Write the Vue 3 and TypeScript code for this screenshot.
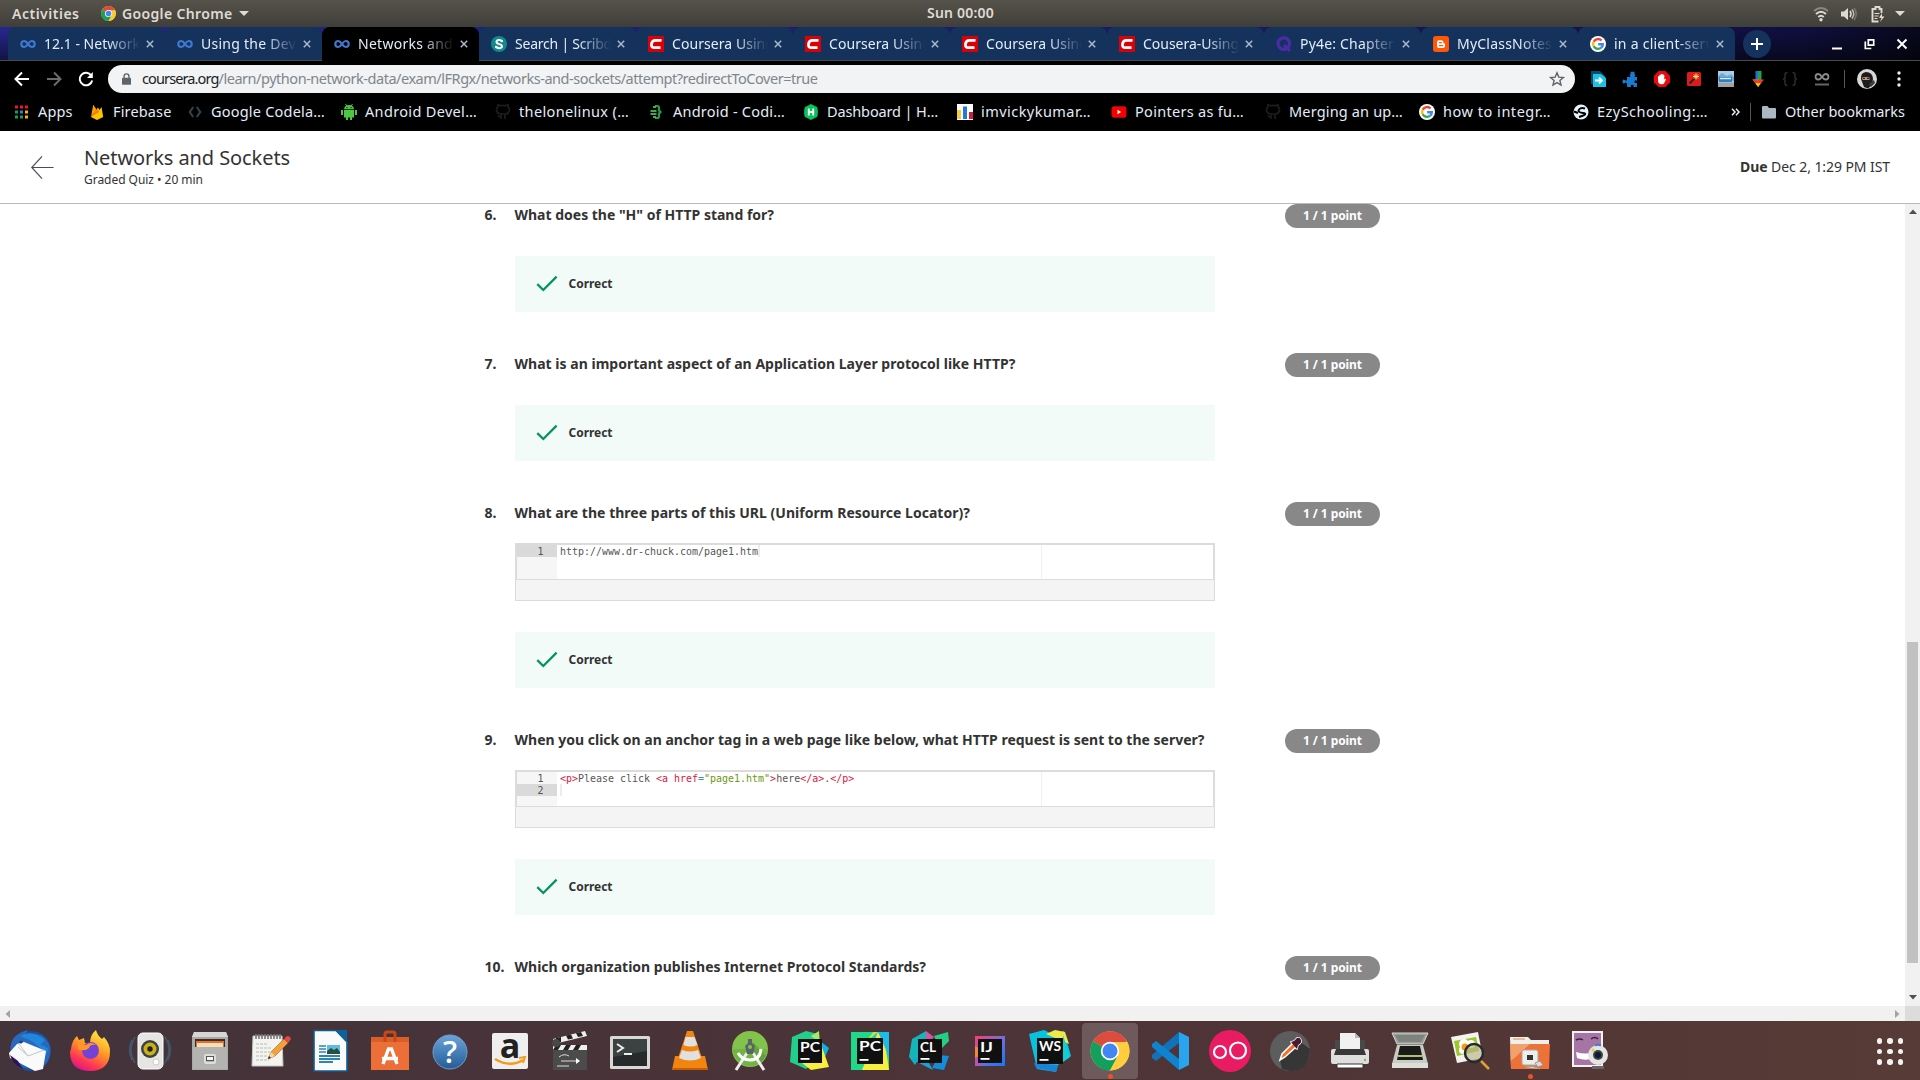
<script setup lang="ts">
import type { ObjectDirective } from 'vue'

interface Tab { icon: string; title: string; width: number; active?: boolean; plain?: boolean }
interface Bookmark { icon: string; label: string; slot: number; width: number }
interface Token { text: string; kind?: string }
interface Question { no: number; text: string; width: number; lines?: Token[][]; answered: boolean }

/* Spreads letters so a label takes up exactly the given number of pixels. */
const vFit: ObjectDirective<HTMLElement, number> = {
  mounted(el, { value }) {
    const count = (el.textContent ?? '').trim().length
    const range = document.createRange()
    range.selectNodeContents(el)
    const natural = range.getBoundingClientRect().width
    if (count > 0 && value) el.style.letterSpacing = `${((value - natural) / count).toFixed(3)}px`
  },
}

const googleG = '<circle cx="8" cy="8" r="8" fill="#fff"/><g fill="none" stroke-width="2.4"><path d="M11.5 4.500A4.900 4.900 0 0 0 3.700 5.700" stroke="#ea4335"/><path d="M3.700 5.700a4.900 4.900 0 0 0 0 4.600" stroke="#fbbc05"/><path d="M3.700 10.300a4.900 4.900 0 0 0 7.500 1.400" stroke="#34a853"/><path d="M11.200 11.700A4.700 4.700 0 0 0 12.800 8.200H8.200" stroke="#4285f4"/></g>'
const octocat = '<path d="M6 15v-2.200c-2 .4-2.600-.8-3-1.500M10 15v-3c0-1-.3-1.500-.7-1.800 2.900-.3 5.200-1.400 5.200-4.400 0-1.200-.6-2.200-1.300-2.900.1-.5.1-1.300-.2-2-.9 0-1.900.5-2.500.9a9 9 0 0 0-5 0C4.900 1.400 3.900.9 3 .9c-.3.700-.3 1.500-.2 2-.7.7-1.300 1.700-1.300 2.900 0 3 2.300 4.100 5.200 4.400-.4.300-.7.900-.7 1.500" fill="none" stroke="#1c1c1f" stroke-width="1.800"/>'
const infinity = '<path d="M8 8C6.600 6 5.700 5 4.300 5a3 3 0 0 0 0 6C6 11 7 9.600 8 8s2-3 3.700-3a3 3 0 0 1 0 6C10.300 11 9.400 10 8 8z" fill="none" stroke="#3f78cf" stroke-width="2.200"/>'
const redC = '<rect width="16" height="16" fill="#d90007"/><path d="M13.500 4.300H7.500Q4 4.300 3.500 8T6.500 11.700H12.500" fill="none" stroke="#fff" stroke-width="2.800"/>'

const glyphs: Record<string, string> = {
  infinity,
  redC,
  google: googleG,
  octocat,
  scribd: '<circle cx="8" cy="8" r="8" fill="#128a8c"/><path d="M11 5.200C9.500 3.300 5.500 3.500 5.500 6c0 2.600 5.500 1.600 5.500 4.300 0 2.300-4.300 2.600-6 .4" fill="none" stroke="#fff" stroke-width="2"/><circle cx="10.800" cy="5" r="1.300" fill="#fff"/><circle cx="5.200" cy="11" r="1.300" fill="#fff"/>',
  quiz: '<circle cx="7.800" cy="7.600" r="5.800" fill="none" stroke="#4b2ca8" stroke-width="3.200"/><path d="M8 9l6 6" stroke="#4b2ca8" stroke-width="3"/>',
  blogger: '<rect width="16" height="16" rx="3" fill="#ff5708"/><path d="M6 4.200h2.400a1.900 1.900 0 0 1 1.900 1.900c0 1 .3 1.200 1 1.200.5 0 .7.300.7.800V10a2 2 0 0 1-2 2H6a2 2 0 0 1-2-2V6.200a2 2 0 0 1 2-2z" fill="#fff"/><path d="M6.300 6.700h2M6.300 9.700h3.400" stroke="#ff5708" stroke-width="1.200" stroke-linecap="round"/>',
  chrome: '<circle cx="8" cy="8" r="8" fill="#fbc934"/><path d="M8 8L1.100 4A8 8 0 0 1 14.900 4z" fill="#dd4b3e"/><path d="M8 8L1.100 4A8 8 0 0 0 8 16l3.500-6z" fill="#1a9e58"/><path d="M8 4.500h7A8 8 0 0 1 8 16l3.300-6z" fill="#fbc934"/><circle cx="8" cy="8" r="3.800" fill="#fff"/><circle cx="8" cy="8" r="3" fill="#4285f4"/>',
  apps: '<g><path d="M1 1.500h3v3h-3zM6 1.500h3v3h-3zM11 1.500h3v3h-3z" fill="#f0142d"/><path d="M1 6.500h3v3h-3z" fill="#12a05c"/><path d="M6 6.500h3v3h-3z" fill="#2b7de9"/><path d="M11 6.500h3v3h-3z" fill="#ffb300"/><path d="M1 11.500h3v3h-3zM6 11.500h3v3h-3z" fill="#12a05c"/><path d="M11 11.500h3v3h-3z" fill="#ffb300"/></g>',
  firebase: '<path d="M2 13L4.200.8 7.500 5.500z" fill="#ffa000"/><path d="M2 13L9 3.500l1.500 2.500L12.500 3l1.700 10L8 16z" fill="#ffc400"/><path d="M2 13L8.700 5l1.500 3z" fill="#f57c00"/>',
  codelabs: '<path d="M6.200 3L2.800 8l3.400 5M9.800 3l3.400 5-3.400 5" fill="none" stroke="#30424d" stroke-width="2.200"/>',
  android: '<path d="M3 6h10v7.500H3zM0 6h2v5H0zM14 6h2v5h-2zM5 13h2v3H5zM9 13h2v3H9z" fill="#4fc644"/><path d="M3 5.300a5 4.300 0 0 1 10 0z" fill="#4fc644"/><path d="M4.500 0l1.400 2M11.500 0l-1.400 2" stroke="#4fc644"/><circle cx="6" cy="3.700" r=".6" fill="#000"/><circle cx="10" cy="3.700" r=".6" fill="#000"/>',
  codi: '<path d="M6 2h2.500q1.500 0 1.500 2v2.500L11.500 8 10 9.500V12q0 2-1.500 2H6" fill="none" stroke="#1e9e4f" stroke-width="2.200"/><path d="M4 3h3M1.500 7h6M1.500 10h6M4 13h3" stroke="#55dd72" stroke-width="1.400"/>',
  hacker: '<path d="M8 0l6 3c1 .5 1.300 9 0 10L8 16 2 13C.7 12 1 3.500 2 3z" fill="#07c15c"/><path d="M5.800 4.500v7M10.200 4.500v7M5.800 8h4.400" stroke="#fff" stroke-width="1.900"/>',
  chart: '<rect width="16" height="16" fill="#fff"/><path d="M0 6h4v9H0z" fill="#f7cd35"/><path d="M6 2.500h4V15H6z" fill="#207cd4"/><path d="M12 8h4v7h-4z" fill="#d01f38"/>',
  youtube: '<rect x=".5" y="2.300" width="15" height="11.400" rx="3" fill="#f60000"/><path d="M6.500 5.800v4.400L10.200 8z" fill="#fff"/>',
  globe: '<circle cx="8" cy="8" r="7.500" fill="#e8f4fb"/><path d="M12 4.500Q8 3 6 5.500T10 9t-4 4M1 7.500l4 1.500" fill="none" stroke="#000" stroke-width="1.900"/>',
  folder: '<path d="M1 3q0-1 1-1h4.500l1.500 2H14q1 0 1 1v8.500q0 1-1 1H2q-1 0-1-1z" fill="#a9b8c2"/>',
}

const tabs: Tab[] = [
  { icon: 'infinity', title: '12.1 - Network', width: 96 },
  { icon: 'infinity', title: 'Using the Dev', width: 95, plain: true },
  { icon: 'infinity', title: 'Networks and', width: 95, active: true },
  { icon: 'scribd', title: 'Search | Scribd', width: 97 },
  { icon: 'redC', title: 'Coursera Using', width: 102 },
  { icon: 'redC', title: 'Coursera Using', width: 102 },
  { icon: 'redC', title: 'Coursera Using', width: 102 },
  { icon: 'redC', title: 'Cousera-Using', width: 96 },
  { icon: 'quiz', title: 'Py4e: Chapter', width: 94 },
  { icon: 'blogger', title: 'MyClassNotes', width: 95 },
  { icon: 'google', title: 'in a client-serv', width: 99, plain: true },
]

const bookmarks: Bookmark[] = [
  { icon: 'apps', label: 'Apps', slot: 75, width: 34.5 },
  { icon: 'firebase', label: 'Firebase', slot: 98, width: 58.5 },
  { icon: 'codelabs', label: 'Google Codela…', slot: 154, width: 114 },
  { icon: 'android', label: 'Android Devel…', slot: 154, width: 112 },
  { icon: 'octocat', label: 'thelonelinux (…', slot: 154, width: 110 },
  { icon: 'codi', label: 'Android - Codi…', slot: 154, width: 112 },
  { icon: 'hacker', label: 'Dashboard | H…', slot: 154, width: 111 },
  { icon: 'chart', label: 'imvickykumar…', slot: 154, width: 110 },
  { icon: 'youtube', label: 'Pointers as fu…', slot: 154, width: 109 },
  { icon: 'octocat', label: 'Merging an up…', slot: 154, width: 114 },
  { icon: 'google', label: 'how to integr…', slot: 154, width: 108 },
  { icon: 'globe', label: 'EzySchooling:…', slot: 154, width: 111 },
]

const extensions: string[] = [
  '<path d="M1 0h9l5 5v8H1z" fill="#0b4a70"/><path d="M3 3h8l5 4v9H3z" fill="#19c3e6"/><path d="M5 9.500h6M9 6.500l3 3-3 3" fill="none" stroke="#fff" stroke-width="1.800"/>',
  '<path d="M5 6h3.500q-1.500-2.200 0-3V.8h4V3q1.500.8 0 3H15v4q-2-1.500-2.500.5T15 12v4h-3.500q.6-2.300-1.300-2.300T9 16H5v-3.500Q4 11 2.800 12 .5 13.500.5 10.500T2.800 9Q4 10 5 9z" fill="#1a7bce"/>',
  '<path d="M4.700 0h6.600L16 4.700v6.600L11.300 16H4.700L0 11.300V4.700z" fill="#ea0a0a"/><path d="M4 9V5.500q.8-1 1.500 0V4q.8-1 1.600 0v-.7q.8-.9 1.600 0V4q.8-.8 1.600 0v4.500q1.700-1.200 1.800-.2l-2 4Q9.300 13.500 7.800 13.300 4 13.500 4 9z" fill="#fff"/>',
  '<rect x="1" y="1" width="14" height="14" rx="1.500" fill="#dd1b1b"/><path d="M3.500 12.500l5-5" stroke="#222" stroke-width="1.800"/><path d="M10 2.500v6M7 5.500h6M8 3.500l4 4M12 3.500l-4 4" stroke="#ffe26a"/>',
  '<rect width="16" height="16" fill="#abcde8"/><path d="M0 5l4-3 5 3 4-2 3 3v4H0z" fill="#6fa9d4"/><rect x="1" y="6" width="13" height="5" fill="#2f80bf"/><path d="M2 7.500h11" stroke="#d7ecfa" stroke-width="1.500"/><rect y="11.500" width="16" height="4.500" fill="#a3a3a3"/>',
  '<path d="M5.500 0h3v9h-3z" fill="#1e71d8"/><path d="M8 0h3.500v9H8z" fill="#1fa548"/><path d="M2.500 8.500h6V16z" fill="#f5c400"/><path d="M8 8.500h6L8 16z" fill="#ee3a2e"/><path d="M2.500 8.500h5l1 3-3 1z" fill="#ee3a2e"/><path d="M8 12l3 .300L8 16l-2.500-3.500z" fill="#f5c400"/>',
  '<path d="M5.500 1.500Q3 1.500 3 4v2q0 2-2 2 2 0 2 2v2q0 2.500 2.500 2.500M10.500 1.500Q13 1.500 13 4v2q0 2 2 2-2 0-2 2v2q0 2.500-2.500 2.500" fill="none" stroke="#2b2b2b" stroke-width="1.600"/>',
  '<path d="M8 6C6.600 4 5.700 3 4.300 3a2.700 2.700 0 0 0 0 5.500C6 8.500 7 7.500 8 6s2-3 3.700-3a2.700 2.700 0 0 1 0 5.500C10.300 8.500 9.400 8 8 6z" fill="none" stroke="#8a8a8a" stroke-width="1.800"/><path d="M1 13.500h14" stroke="#666" stroke-width="2"/>',
]

const chromeBig = '<circle cx="24" cy="24" r="19.500" fill="#ffcd40"/><path d="M24 24L7.100 14.300A19.500 19.500 0 0 1 40.900 14.300z" fill="#dd4b3e"/><path d="M24 24L7.100 14.300A19.500 19.500 0 0 0 24 43.500l8-14z" fill="#12a05c"/><path d="M24 15h17.300A19.500 19.500 0 0 1 24 43.500l7.900-15z" fill="#ffcd40"/><circle cx="24" cy="24" r="9.200" fill="#fff"/><circle cx="24" cy="24" r="7.500" fill="#4285f4"/>'

function badge(label: string, x: number, y: number, s: number): string {
  return `<rect x="${x}" y="${y}" width="${s}" height="${s}" fill="#101010"/><text x="${x + 2}" y="${y + 12.5}" font-family="Lato, sans-serif" font-weight="700" font-size="14" textLength="${label === 'IJ' ? 13 : label === 'CL' ? 16 : s - 4}" lengthAdjust="spacingAndGlyphs" fill="#fff">${label}</text><rect x="${x + 2.5}" y="${y + s - 5}" width="9" height="1.800" fill="#fff"/>`
}

const dock: { art: string; active?: boolean; running?: boolean }[] = [
  { art: '<circle cx="25" cy="24" r="20" fill="#1d4f9c"/><path d="M5 28Q1 8 22 3l-3 5Q38 3 44 20q2 17-14 24l3-5-9 3q-14-2-19-14z" fill="#2868bd"/><path d="M14 9q12-7 25 4l-5 5q4 0 8 4-5 18-17 20L40 26 26 14z" fill="#2187dd"/><path d="M3 26l8-9 7-2 22 9-3 18-8 2L4 31z" fill="#fafafa"/><path d="M12 20l10 9 16-6M13 17l9 12" stroke="#c2c4c8" fill="none"/><path d="M4 28q2 9 13 14l-5-8z" fill="#2b145c"/><circle cx="15" cy="15" r="1.500" fill="#143e74"/>' },
  { art: '<defs><linearGradient id="fx" x1=".8" y1="0" x2=".3" y2="1"><stop stop-color="#fff14a"/><stop offset=".45" stop-color="#ff9a24"/><stop offset=".8" stop-color="#ff3455"/><stop offset="1" stop-color="#d8178a"/></linearGradient></defs><path d="M5 22Q6 13 11 9l2 4 5-2 1 5h5q0-8 6-13 1 5 6 9l2-2q6 7 6 14 0 20-20 20T4 25z" fill="url(#fx)"/><circle cx="24.500" cy="23.500" r="8.500" fill="#7442d8"/><path d="M12 17l8 1q5-4 10 0-6-1-7 3-4 4-11 1z" fill="#ff9822"/>' },
  { art: '<g fill="none" stroke="#43647e" stroke-width="1.500" opacity=".7"><path d="M9 10q-8 13 0 26M6 13q-5 10 0 20M39 10q8 13 0 26M42 13q5 10 0 20"/></g><rect x="12" y="6" width="25" height="36" rx="5" fill="#e5e5e3" stroke="#fff"/><circle cx="24" cy="22" r="9" fill="#40413e"/><circle cx="24" cy="22" r="6.500" fill="#c9b01c"/><circle cx="24" cy="22" r="2.700" fill="#222"/><circle cx="30" cy="35" r="3" fill="#fff" stroke="#ccc"/>' },
  { art: '<path d="M8 5h32l2 5v33H6V10z" fill="#a9a9a7"/><path d="M8 5h32l2 5H6z" fill="#d6d6d4"/><rect x="9" y="12" width="30" height="9" fill="#3b3028"/><path d="M10 14h28v6H10z" fill="#e2702c"/><path d="M11 16h26v5H11z" fill="#f6dfb8"/><path d="M7 20h34v22H7z" fill="#b3b3b1"/><rect x="19" y="28" width="10" height="8" rx="1" fill="none" stroke="#ddd" stroke-width="2"/><rect x="20.500" y="29.500" width="7" height="4" fill="#f8f8f8" stroke="#555"/>' },
  { art: '<path d="M7 9h29l1 30H6z" fill="#f3f3ef" stroke="#c7c7c1"/><path d="M10 7v5M13 7v5M16 7v5M19 7v5M22 7v5M25 7v5M28 7v5M31 7v5M34 7v5" stroke="#777" stroke-width="1.600"/><path d="M10 17h12M10 21h16M10 25h14M10 29h11M10 33h13" stroke="#bbb" stroke-dasharray="3 1"/><path d="M22 32l3-7L38 12l4 4-13 13z" fill="#f3a13a" stroke="#a85b15" stroke-width=".6"/><path d="M38 12l3-3q3 0 4 3l-3 4z" fill="#e04a4a"/><path d="M22 32l3-7 4 4z" fill="#f1d6aa"/><path d="M22 32l1-3 2 2z" fill="#222"/>' },
  { art: '<path d="M8 3.500h22L41 15v29H8z" fill="#fafafa" stroke="#0d5d92" stroke-width="1.600"/><path d="M29 3h12v12z" fill="#0a639c"/><path d="M13 19h7M13 22h7M13 25h7" stroke="#2f84b5" stroke-width="1.500"/><rect x="21" y="18" width="13" height="9" fill="#5cbbe7"/><path d="M21 27v-3l4-3 3 2 3-2 3 4v2z" fill="#29503b"/><path d="M13 29h21M13 32h21M13 35h14" stroke="#2f84b5" stroke-width="1.800"/>' },
  { art: '<path d="M5 10h38v33H5z" fill="#ec6f38"/><path d="M5 10h38v5H5z" fill="#db5e29"/><path d="M19 15V7q0-2 2-2h6q2 0 2 2v8" fill="none" stroke="#c94813" stroke-width="3"/><path d="M17 37l5.500-15h3L31 37M16 31.500h16" fill="none" stroke="#fff" stroke-width="3.400"/>' },
  { art: '<defs><linearGradient id="hp" x2="0" y2="1"><stop stop-color="#6ba4d9"/><stop offset="1" stop-color="#245b98"/></linearGradient></defs><circle cx="24" cy="25" r="17" fill="url(#hp)" stroke="#6c9fc9" stroke-width="1"/><text x="24" y="36" text-anchor="middle" font-family="Open Sans, sans-serif" font-weight="600" font-size="31" fill="#fff">?</text>' },
  { art: '<rect x="6" y="6" width="36" height="36" rx="2" fill="#efefef"/><text x="24" y="31" text-anchor="middle" font-family="Open Sans, sans-serif" font-weight="700" font-size="34" fill="#222">a</text><path d="M9 32q15 9 28 1" fill="none" stroke="#f79a1c" stroke-width="2.500"/><path d="M33 31l6-1-2 6" fill="none" stroke="#f79a1c" stroke-width="2"/>' },
  { art: '<rect x="7" y="18" width="34" height="25" fill="#4b4b4b"/><rect x="7" y="18" width="34" height="5" fill="#eee"/><path d="M10 18h5l-3 5H7zM20 18h5l-3 5h-5zM30 18h5l-3 5h-5z" fill="#222"/><path d="M7 12L39 4l2 5L8 17z" fill="#eee"/><path d="M10 11l5-1 0 5-5 1zM20 8.500l5-1 2 4-5 1zM30 6l5-1 2 4-5 1z" fill="#222"/><circle cx="10" cy="16" r="4" fill="#484848"/><path d="M13 30q5-4 10-1M15 34h18M11 39h12" stroke="#ddd" fill="none"/><path d="M30 31l4 3-4 3z" fill="#fff"/>' },
  { art: '<rect x="4" y="9" width="40" height="33" rx="1.500" fill="#d8d8d6"/><rect x="7" y="12" width="34" height="27" fill="#262a2b"/><path d="M7 12h34v12L7 30z" fill="#3c4142"/><path d="M11 17l6 4-6 4M18 27h8" fill="none" stroke="#eee" stroke-width="2"/>' },
  { art: '<path d="M9 29h30l3 14H6z" fill="#f28410"/><path d="M21 4h6l10 30q-13 7-26 0z" fill="#f28410"/><path d="M19.500 10h9l3 8q-7 3-14 0z" fill="#e0e0e0"/><path d="M16 23q8 3 16 0l3 8q-11 5-22 0z" fill="#e0e0e0"/><path d="M6 42h36" stroke="#c65c05" stroke-width="2"/>' },
  { art: '<circle cx="24" cy="22" r="18" fill="#82c34c"/><path d="M7 22h34a17 17 0 0 1-34 0z" fill="#72b442"/><path d="M27 15l13 14-7 9-9-13z" fill="#4c8e3a" opacity=".5"/><path d="M21 26L10 43M27 26l11 17" stroke="#eee" stroke-width="3"/><path d="M12 26q4 7 12 7 10 0 11-11" fill="none" stroke="#fff" stroke-width="3"/><path d="M22 12h4v4l3 3-2 8h-6l-2-8 3-3z" fill="#5c6368"/><circle cx="24" cy="20" r="2" fill="#82c34c"/>' },
  { art: '<path d="M6 10L20 4l12 3 5 22-17 13L4 35z" fill="#23ce8d"/><path d="M25 9l8-5 1 13z" fill="#a3e96b"/><path d="M34 14l9 7-4 9-6-2z" fill="#0db1e4"/><path d="M36 20l7 20-18 3-9-7z" fill="#f8ef3f"/>' + badge('PC', 12, 12, 24) },
  { art: '<path d="M5 5h38v38H5z" fill="#21d789"/><path d="M26 5h17v25L30 12z" fill="#1dbbe8"/><path d="M16 43L32 5l8 18 3 20z" fill="#f7ee3b"/><path d="M20 15L27 5h5z" fill="#b2e84b"/>' + badge('PC', 11, 11, 26) },
  { art: '<path d="M6 12L20 4v14L9 38l-6-8z" fill="#13b5b8"/><path d="M20 4l8 6-8 8z" fill="#d554a8"/><path d="M28 9l14-4 1 9-9 9z" fill="#23cf87"/><path d="M33 28l10 1-5 14-12-2z" fill="#118dd9"/><path d="M5 32l22 11-7-12z" fill="#12a5db"/>' + badge('CL', 12, 12, 24) },
  { art: '<defs><linearGradient id="ij" x2="1" y2="1"><stop stop-color="#fd3b72"/><stop offset=".5" stop-color="#7a6bd8"/><stop offset="1" stop-color="#087cfa"/></linearGradient></defs><rect x="9" y="9" width="30" height="30" fill="url(#ij)"/><path d="M9 20l5 5v14H9z" fill="#b653b7"/><path d="M9 19l4 2v8l-4 2z" fill="#f0873c"/>' + badge('IJ', 12, 12, 24) },
  { art: '<path d="M3 7l15-4 8 4 12-3 7 25-13 9-2 7-19-3z" fill="#07c3dd"/><path d="M20 7l9-4 10 2 4 12z" fill="#eee94b"/><path d="M8 36l24 2-2 7-20-4z" fill="#1b83d5"/><path d="M37 8l7 22-7 5z" fill="#10ced5"/>' + badge('WS', 11, 11, 26) },
  { art: chromeBig, active: true, running: true },
  { art: '<path d="M33 5l10 5v28l-10 5z" fill="#2ba4ee"/><path d="M33 5v11L10 34l-4-3v-3z" fill="#1272b8"/><path d="M33 43V32L10 14l-4 3v3z" fill="#0f83cd"/>' },
  { art: '<circle cx="24" cy="24" r="21" fill="#e91c63"/><circle cx="14" cy="25" r="6" fill="none" stroke="#fff" stroke-width="2.200"/><circle cx="32" cy="23.500" r="8" fill="none" stroke="#fff" stroke-width="2.200"/>' },
  { art: '<circle cx="24" cy="24" r="20" fill="#5d5d5d"/><path d="M33 14l11 8q-1 22-20 22l-8-2-2-9z" fill="#363636"/><path d="M14 33l2-6 10-10-1-2 3-1 3-3q3-1 4 2t-3 5l-1 4-2-1-10 9z" fill="#ef702d" stroke="#fff" stroke-width="1.500"/><path d="M25 15l3-1 3-3q3-1 4 2t-3 5l-1 4z" fill="#4b1731"/>' },
  { art: '<path d="M9 13h30v14H9z" fill="#494949"/><path d="M14 6h15l5 5v13H14z" fill="#f1f1f1"/><path d="M29 6v5h5z" fill="#bbb"/><rect x="5" y="22" width="38" height="15" rx="2" fill="#dedede"/><path d="M10 22h28l2 6H8z" fill="#383838"/><path d="M11 37h26v4H11z" fill="#fff" stroke="#333"/><circle cx="39" cy="33" r="1.200" fill="#72c742"/>' },
  { art: '<path d="M6 6h36l-5 11H11z" fill="#9ba09b" stroke="#d4d6d2"/><path d="M9 8h30l-4 7H13z" fill="#7d837f"/><path d="M11 18h26l5 19H6z" fill="#c9cbc7"/><path d="M14 19h20l3 14H11z" fill="#191b19"/><path d="M12 29h24" stroke="#e4f295" stroke-width="1.500"/><path d="M6 36h36v5H6z" fill="#deded9"/>' },
  { art: '<path d="M5 10l27-5 5 26-26 5z" fill="#f3f3f0"/><path d="M8 14l22-4 3 14-22 5z" fill="#9fc52d"/><g fill="#fff"><circle cx="18" cy="17" r="5"/><circle cx="25" cy="17" r="4"/><circle cx="17" cy="23" r="4"/></g><circle cx="19" cy="20" r="3.500" fill="#f29b1a"/><circle cx="28" cy="26" r="9" fill="#bbb48a" fill-opacity=".65" stroke="#252b2d" stroke-width="2.500"/><path d="M35 34l8 8" stroke="#df9f3a" stroke-width="2.500"/>' },
  { art: '<path d="M4 10h18l3 3h18v28H5z" fill="#efefeb"/><path d="M7 12h12" stroke="#ef8247"/><path d="M4 17h40l-1 25H5z" fill="#ee7138"/><path d="M4 17h20L5 34z" fill="#f3bc8c" opacity=".65"/><rect x="16" y="23" width="16" height="15" rx="2" fill="#eceeea" stroke="#aaa"/><path d="M21 28h6v5h-6z" fill="#333"/><path d="M19 40q8-2 15 2M29 36l5-2 3 4-5 2z" fill="#ddd" stroke="#999"/>', running: true },
  { art: '<rect x="7" y="5" width="29" height="34" fill="#a775a5" stroke="#f2f2f2" stroke-width="2"/><path d="M10 13q4-2 7 0M25 12q4-3 7 0" stroke="#342638" stroke-width="1.500" fill="none"/><path d="M10 25q9 3 20 0v5q-9 5-19 1z" fill="#fff"/><path d="M26 39h12v3H26z" fill="#666"/><circle cx="32" cy="28" r="10" fill="#e5e5e5"/><circle cx="32" cy="28" r="5" fill="#3c4345"/><circle cx="32" cy="28" r="3" fill="#101a2e"/><circle cx="27" cy="23" r="1.600" fill="#d8d831"/><path d="M29 18.500q3-1.500 6 0" stroke="#4a7fc0" stroke-width="2" fill="none"/>' },
]

const questions: Question[] = [
  { no: 6, text: 'What does the "H" of HTTP stand for?', width: 259.5, answered: true },
  { no: 7, text: 'What is an important aspect of an Application Layer protocol like HTTP?', width: 501, answered: true },
  {
    no: 8, text: 'What are the three parts of this URL (Uniform Resource Locator)?', width: 455.5, answered: true,
    lines: [[{ text: 'http://www.dr-chuck.com/page1.htm' }]],
  },
  {
    no: 9, text: 'When you click on an anchor tag in a web page like below, what HTTP request is sent to the server?', width: 690, answered: true,
    lines: [
      [
        { text: '<p>', kind: 'tag' }, { text: 'Please click ' }, { text: '<a href', kind: 'tag' }, { text: '=', kind: 'op' },
        { text: '"page1.htm"', kind: 'str' }, { text: '>', kind: 'tag' }, { text: 'here' }, { text: '</a>', kind: 'tag' },
        { text: '.' }, { text: '</p>', kind: 'tag' },
      ],
      [],
    ],
  },
  { no: 10, text: 'Which organization publishes Internet Protocol Standards?', width: 411.5, answered: false },
]
</script>

<template>
  <div class="desktop">
    <div class="panel">
      <span class="activities" v-fit="67.5">Activities</span>
      <svg class="panel-app" viewBox="0 0 16 16" v-html="glyphs.chrome"></svg>
      <span class="panel-name" v-fit="110.5">Google Chrome</span>
      <i class="caret"></i>
      <span class="clock"><span v-fit="67">Sun 00:00</span></span>
      <div class="status">
        <svg width="16" height="16" viewBox="0 0 16 16" fill="none" stroke-width="1.900">
          <path d="M1 5q7-6 14 0" stroke="#8a8881" />
          <path d="M3 8q5-4.500 10 0M5.200 11q2.800-2.500 5.600 0" stroke="#dfdbd2" />
          <circle cx="8" cy="13.800" r="1.700" fill="#dfdbd2" />
        </svg>
        <svg width="16" height="16" viewBox="0 0 16 16" fill="none" stroke-width="1.500">
          <path d="M0 5.500h3L7 2v12L3 10.500H0z" fill="#dfdbd2" />
          <path d="M9 5q2 3 0 6" stroke="#dfdbd2" /><path d="M11 3.500q3.500 4.500 0 9" stroke="#c0bdb5" /><path d="M13 2q4.500 6 0 12" stroke="#77756e" />
        </svg>
        <svg width="16" height="18" viewBox="0 0 16 18" fill="none">
          <path d="M12.500 8V4h-2V2h-4v2h-3v12.500h6" stroke="#dfdbd2" stroke-width="1.900" />
          <path d="M5.500 8.500h5M5.500 11h4M5.500 13.500h3" stroke="#dfdbd2" stroke-width="1.200" />
          <path d="M13 8l-3 5h2.500L11 17l4.500-5.500H13z" fill="#dfdbd2" />
        </svg>
        <i class="caret"></i>
      </div>
    </div>

    <div class="tabstrip">
      <div v-for="(tab, i) in tabs" :key="i" class="tab" :class="{ active: tab.active, plain: tab.plain }">
        <svg class="glyph" viewBox="0 0 16 16" v-html="glyphs[tab.icon]"></svg>
        <span class="tab-title"><span v-fit="tab.width">{{ tab.title }}</span></span>
        <svg class="tab-close" viewBox="0 0 8 8"><path d="M.8.8l6.400 6.400M7.200.8L.8 7.200" /></svg>
      </div>
      <div class="newtab"><svg viewBox="0 0 12 12"><path d="M6 0v12M0 6h12" stroke="#fff" stroke-width="2" /></svg></div>
      <div class="wm">
        <svg width="12" height="12" viewBox="0 0 12 12"><path d="M1 10.500h10" stroke="#fff" stroke-width="2" /></svg>
        <svg width="12" height="12" viewBox="0 0 12 12" fill="none" stroke="#fff" stroke-width="1.700"><path d="M4.300 1.800h5.400v5.400H4.300z" /><path d="M1.300 3.500v7h6" /></svg>
        <svg width="12" height="12" viewBox="0 0 12 12"><path d="M1.500 1.500l9 9M10.500 1.500l-9 9" stroke="#fff" stroke-width="2" /></svg>
      </div>
    </div>

    <div class="toolbar">
      <svg class="nav" viewBox="0 0 16 16"><path d="M15 8H2M8 1.500L1.500 8 8 14.500" /></svg>
      <svg class="nav dim" viewBox="0 0 16 16"><path d="M1 8h13M8 1.500L14.500 8 8 14.500" /></svg>
      <svg class="nav" viewBox="0 0 16 16"><path d="M13.300 4.500A6.300 6.300 0 1 0 14.200 9.500" /><path d="M14.800 1v6H9z" class="solid" /></svg>
      <div class="omnibox">
        <svg class="lock" viewBox="0 0 10 13"><rect y="5" width="10" height="8" rx="1" fill="#5f6368" /><path d="M2.300 5.500V3.500a2.700 2.700 0 0 1 5.400 0v2" fill="none" stroke="#5f6368" stroke-width="1.500" /></svg>
        <span class="url"><b v-fit="76.500">coursera.org</b><span v-fit="599">/learn/python-network-data/exam/lFRgx/networks-and-sockets/attempt?redirectToCover=true</span></span>
        <svg class="star" viewBox="0 0 16 16"><path d="M8 1.800l1.800 4.300 4.600.4-3.500 3 1.100 4.500L8 11.600 4 14l1.100-4.500-3.500-3 4.600-.4z" fill="none" stroke="#5f6368" stroke-width="1.400" /></svg>
      </div>
      <div class="extensions">
        <svg v-for="(art, i) in extensions" :key="i" class="glyph" viewBox="0 0 16 16" v-html="art"></svg>
      </div>
      <i class="rule"></i>
      <svg class="avatar" viewBox="0 0 20 20"><circle cx="10" cy="10" r="10" fill="#d9d7d5" /><path d="M4 10Q3.500 3.500 9 3q6.500 0 7 7l-1 6-4 3.500-4-1.500z" fill="#1c1c1e" /><path d="M5 8.500q4-1 7.500 0V11H5.500z" fill="#be9a78" /><path d="M6 9.500h2M10 9.500h2" stroke="#222" /><path d="M12 15l5-4 1 3-4 4z" fill="#3c3c40" /></svg>
      <svg class="dots" viewBox="0 0 4 16"><circle cx="2" cy="2" r="1.700" /><circle cx="2" cy="8" r="1.700" /><circle cx="2" cy="14" r="1.700" /></svg>
    </div>

    <div class="bookmarks">
      <div v-for="mark in bookmarks" :key="mark.label" class="bookmark" :style="{ width: mark.slot + 'px' }">
        <svg class="glyph" viewBox="0 0 16 16" v-html="glyphs[mark.icon]"></svg>
        <span v-fit="mark.width">{{ mark.label }}</span>
      </div>
      <svg class="more" viewBox="0 0 9 8"><path d="M1 .8L4 4 1 7.200M5 .8L8 4 5 7.200" /></svg>
      <i class="rule"></i>
      <div class="bookmark">
        <svg class="glyph" viewBox="0 0 16 16" v-html="glyphs.folder"></svg>
        <span v-fit="120">Other bookmarks</span>
      </div>
    </div>

    <header class="quiz-head">
      <svg class="back" viewBox="0 0 24 24"><path d="M23.500 12H1M11.500.5L.8 12l10.700 11.500" /></svg>
      <div class="quiz-name">
        <h1><span v-fit="206">Networks and Sockets</span></h1>
        <p><span v-fit="119">Graded Quiz • 20 min</span></p>
      </div>
      <div class="due"><span v-fit="150"><b>Due</b> Dec 2, 1:29 PM IST</span></div>
    </header>

    <div class="viewport">
      <main class="questions">
        <section v-for="q in questions" :key="q.no" class="question">
          <div class="number">{{ q.no }}.</div>
          <div class="body">
            <h2><span v-fit="q.width">{{ q.text }}</span></h2>
            <div v-if="q.lines" class="editor">
              <div class="pane">
                <div class="gutter">
                  <div v-for="(line, i) in q.lines" :key="i" class="lineno" :class="{ current: i === q.lines.length - 1 }">{{ i + 1 }}</div>
                </div>
                <div class="code">
                  <div v-for="(line, i) in q.lines" :key="i" class="codeline"><span v-for="(t, k) in line" :key="k" :class="t.kind">{{ t.text }}</span><i v-if="i === q.lines.length - 1" class="cursor"></i></div>
                </div>
                <div class="beyond"></div>
              </div>
              <div class="console"></div>
            </div>
            <div v-if="q.answered" class="verdict">
              <svg viewBox="0 0 22 17"><path d="M1.300 9.200l6 5.800L20.600 1.600" /></svg>
              <span v-fit="44">Correct</span>
            </div>
          </div>
          <div class="points"><span v-fit="59">1 / 1 point</span></div>
        </section>
      </main>
      <div class="vbar">
        <svg viewBox="0 0 8 5"><path d="M0 5l4-4.500L8 5z" fill="#505050" /></svg>
        <div class="thumb"></div>
        <svg viewBox="0 0 8 5"><path d="M0 0l4 4.500L8 0z" fill="#505050" /></svg>
      </div>
    </div>
    <div class="hbar">
      <svg viewBox="0 0 5 8"><path d="M5 0L.5 4 5 8z" fill="#a3a3a3" /></svg>
      <svg viewBox="0 0 5 8"><path d="M0 0l4.500 4L0 8z" fill="#a3a3a3" /></svg>
      <div class="corner"></div>
    </div>

    <div class="dock">
      <div v-for="(app, i) in dock" :key="i" class="app" :class="{ active: app.active }">
        <svg viewBox="0 0 48 48" v-html="app.art"></svg>
        <i v-if="app.running" class="running"></i>
      </div>
      <div class="grid"><i v-for="n in 9" :key="n"></i></div>
    </div>
  </div>
</template>

<style>
html, body { margin: 0; overflow: hidden; background: #fff; }
</style>

<style scoped>
* { box-sizing: border-box; }
.desktop { width: 1920px; height: 1080px; display: flex; flex-direction: column; overflow: hidden; font-family: "Noto Sans", "Open Sans", sans-serif; color: #333; }
.desktop span { white-space: nowrap; }
svg { display: block; flex: none; overflow: visible; }
.glyph { width: 16px; height: 16px; }

.panel { position: relative; height: 27px; flex: none; display: flex; align-items: center; padding: 0 15px 0 12px; background: linear-gradient(#56534b, #403e39); color: #dfdbd2; font: 600 14px/26px "Noto Sans", sans-serif; }
.activities { width: 89px; }
.panel-app { width: 15px; height: 15px; margin-right: 6px; }
.panel-name { width: 117px; }
.caret { width: 0; height: 0; border: 5px solid transparent; border-top-color: #dfdbd2; border-bottom: 0; }
.clock { position: absolute; left: 927px; top: 0; }
.status { margin-left: auto; display: flex; align-items: center; gap: 12px; }
.status .caret { margin-left: -2px; }

.tabstrip { height: 34px; flex: none; display: flex; padding-left: 8px; border-bottom: 1px solid #4a4a4a; background: linear-gradient(transparent 10%, rgba(0, 0, 0, .5)), linear-gradient(90deg, #26268a, #1a1a66 60%, #0f0f3e 94%, #08081c); color: #e3edf7; font: 14px/32px "Noto Sans", sans-serif; }
.tab { position: relative; width: 157px; height: 33px; flex: none; display: flex; align-items: center; padding: 0 11px 0 12px; background: #14325b; border-radius: 8px 8px 0 0; }
.tab::after { content: ""; position: absolute; right: -1px; top: 7px; width: 1px; height: 20px; background: #5c7594; }
.tab.plain::after, .tab.active::after { display: none; }
.tab.active { background: #000; height: 34px; padding-bottom: 1px; }
.tab-title { width: 97px; margin-left: 8px; overflow: hidden; mask-image: linear-gradient(90deg, #000 65%, transparent 99%); }
.tab-close { width: 8px; height: 8px; margin-left: 5px; }
.tab-close path { stroke: #a9bacb; stroke-width: 1.5; }
.newtab { width: 28px; height: 28px; margin: 3px 0 0 8px; border-radius: 50%; background: #14325b; display: flex; align-items: center; justify-content: center; }
.newtab svg { width: 12px; height: 12px; }
.wm { margin: 0 12px 0 auto; display: flex; gap: 20.500px; align-items: center; }

.toolbar { height: 35px; flex: none; display: flex; align-items: center; padding-left: 14px; background: #000; }
.nav { width: 16px; height: 16px; margin-right: 16px; fill: none; stroke: #fff; stroke-width: 2; }
.nav .solid { fill: #fff; stroke: none; }
.nav.dim { stroke: #6c6c6c; }
.omnibox { width: 1467px; height: 28px; margin-left: -2px; border-radius: 14px; background: #f1f3f4; display: flex; align-items: center; padding: 0 10px 0 14px; }
.lock { width: 9px; height: 12px; margin-right: 11px; }
.url { display: flex; flex: 1; padding-bottom: 2px; font: 14.500px/26px "Noto Sans", sans-serif; color: #80868b; }
.url b { font-weight: 400; color: #202124; white-space: nowrap; }
.star { width: 16px; height: 16px; }
.extensions { display: flex; gap: 16px; margin-left: 15px; }
.rule { width: 1px; height: 18px; background: #555; }
.toolbar .rule { margin: 0 12px 0 14px; }
.avatar { width: 20px; height: 20px; }
.dots { width: 4px; height: 16px; margin-left: 20px; fill: #e8f0f8; }

.bookmarks { height: 35px; flex: none; display: flex; align-items: center; padding: 0 0 3px 14px; background: #000; color: #e3edf7; font: 14.500px/30px "Noto Sans", sans-serif; }
.bookmark { display: flex; align-items: center; gap: 8px; flex: none; }
.bookmark span { padding-bottom: 2px; }
.more { width: 9px; height: 8px; margin: 0 10px 0 4px; fill: none; stroke: #e3edf7; stroke-width: 1.500; }
.bookmarks .rule { margin-right: 10px; }

.quiz-head { height: 73px; flex: none; display: flex; align-items: center; padding: 0 30px 0 31px; border-bottom: 1px solid #bbb; background: #fff; }
.back { width: 23px; height: 23px; fill: none; stroke: #4a4a58; stroke-width: 1.200; }
.quiz-name { margin: 0 auto 0 30px; }
h1 { margin: 0; font-size: 20px; line-height: 26px; font-weight: 400; }
.quiz-name p { margin: 0; font-size: 12px; line-height: 18px; }
.due { font-size: 14px; line-height: 20px; }
.due b { font-weight: 700; }

.viewport { height: 802px; flex: none; display: flex; overflow: hidden; background: #fff; }
.questions { flex: 1; padding-left: 484.500px; }
.question { display: flex; align-items: flex-start; margin-bottom: 41px; }
.number { width: 30px; font-size: 14px; line-height: 22px; font-weight: 700; }
.body { width: 700.500px; margin-right: 70px; }
h2 { margin: 0; font-size: 14px; line-height: 22px; font-weight: 700; }
.points { width: 95px; height: 24px; border-radius: 12px; background: #888; color: #fff; font-size: 12px; font-weight: 700; line-height: 23px; text-align: center; }
.verdict { height: 56px; margin-top: 30px; padding-left: 21.500px; display: flex; align-items: center; background: #f2fbf8; font-size: 12px; font-weight: 700; line-height: 18px; }
.verdict svg { width: 22px; height: 17px; margin: 0 10.500px 1px 0; fill: none; stroke: #05945b; stroke-width: 2.300; }
.editor { margin-top: 19px; height: 58px; border: 1px solid #dcdcdc; background: #f4f4f4; }
.editor + .verdict { margin-top: 31px; }
.pane { height: 36px; display: flex; border: 1px solid #dcdcdc; background: #fff; font: 9.970px/14px "DejaVu Sans Mono", monospace; color: #555; }
.gutter { width: 40px; background: #f6f6f6; }
.lineno { height: 12px; padding-right: 13px; text-align: right; }
.lineno.current { background: #dadada; }
.code { width: 485px; padding-left: 3.500px; border-right: 1px solid #f0f0f0; }
.codeline { display: flex; height: 12px; white-space: pre; }
.desktop .codeline span { white-space: pre; }
.cursor { width: 2px; height: 12px; background: #ececec; }
.tag { color: #dc143c; }
.op { color: #3e999f; }
.str { color: #6a9a10; }

.vbar { width: 15px; background: #f1f1f1; display: flex; flex-direction: column; align-items: center; padding: 5px 0; }
.vbar svg { width: 8px; height: 5px; }
.thumb { width: 11px; height: 321px; margin: 428px 0 32px; background: #c1c1c1; }
.hbar { height: 15px; flex: none; display: flex; align-items: center; background: #f1f1f1; padding-left: 5px; }
.hbar svg { width: 5px; height: 8px; }
.hbar svg + svg { margin: 0 5px 0 auto; }
.corner { width: 15px; height: 15px; background: #dcdcdc; }

.dock { height: 59px; flex: none; display: flex; background: linear-gradient(90deg, #43333a, #4a3339 40%, #503536 70%, #563b36); }
.app { position: relative; width: 56px; height: 56px; flex: none; margin: 2px 2px 0; border-radius: 4px; display: flex; justify-content: center; padding-top: 4px; }
.app svg { width: 48px; height: 48px; }
.app.active { background: #6e5a5c; }
.running { position: absolute; left: 25.500px; bottom: 0; width: 5px; height: 5px; border-radius: 50%; background: #e95420; }
.grid { display: grid; grid-template-columns: repeat(3, 5.500px); grid-auto-rows: 5.500px; gap: 5px; margin: 17px 17px 0 auto; align-content: start; }
.grid i { border-radius: 50%; background: #f5f3f2; }
</style>
